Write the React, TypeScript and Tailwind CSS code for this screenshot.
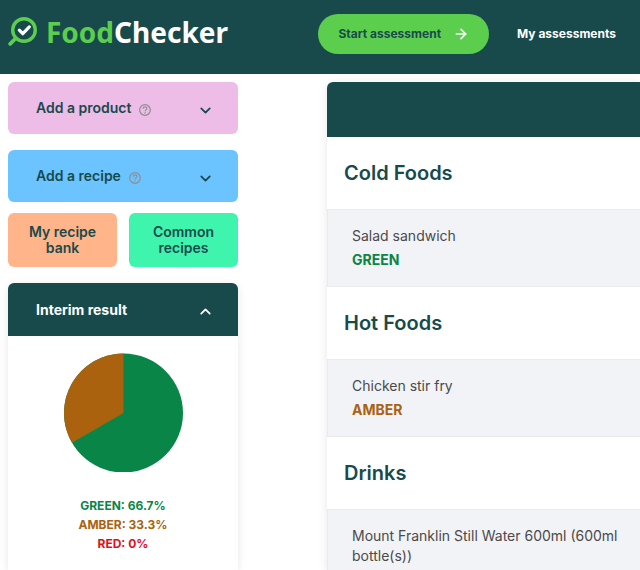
import type { ReactNode } from 'react';
import { ArrowRight, ChevronDown, ChevronUp } from 'lucide-react';

const menu = [
  { category: 'Cold Foods', item: 'Salad sandwich', rating: 'GREEN' },
  { category: 'Hot Foods', item: 'Chicken stir fry', rating: 'AMBER' },
  { category: 'Drinks', item: 'Mount Franklin Still Water 600ml (600ml bottle(s))' },
];

const ratingColors: Record<string, string> = {
  GREEN: 'text-[#088547]',
  AMBER: 'text-[#ab620f]',
  RED: 'text-[#e01020]',
};

function Logo() {
  return (
    <a href="#" className="flex items-center gap-2 text-white">
      <svg width="30" height="30" viewBox="0 0 30 30" fill="none" strokeLinecap="round" strokeLinejoin="round">
        <circle cx="16" cy="13" r="11.3" stroke="#5bce4e" strokeWidth="3.4" />
        <path d="M7.5 21.5 2.2 26.8" stroke="#5bce4e" strokeWidth="3.8" />
        <path d="m11.3 13.2 3.5 3.5 6.5-6.8" stroke="#fff" strokeWidth="3.2" />
      </svg>
      <span className="font-['Noto_Sans',sans-serif] text-[28px] leading-9 font-bold">
        <span className="text-[#5bce4e]">Food</span>Checker
      </span>
    </a>
  );
}

function HelpIcon() {
  return (
    <svg width="12" height="12" viewBox="0 0 11 11" fill="none" stroke="#8e8e94" className="mt-1">
      <circle cx="5.5" cy="5.5" r="4.9" strokeWidth="1.1" />
      <path d="M3.8 4.3c0-2.2 3.4-2.2 3.4-.1 0 1.2-1.7 1.2-1.7 2.5" strokeWidth="1.1" />
      <path d="M5.5 7.6v1.2" strokeWidth="1.2" />
    </svg>
  );
}

function AddButton({ className, children }: { className: string; children: ReactNode }) {
  return (
    <button
      className={`flex h-[52px] w-full shrink-0 items-center rounded-md pr-6 pl-7 text-sm font-semibold ${className}`}
    >
      <span>{children}</span>
      <span className="ml-2">
        <HelpIcon />
      </span>
      <ChevronDown size={17} strokeWidth={2.5} className="mt-1 ml-auto" />
    </button>
  );
}

function PieChart() {
  return (
    <svg width="120" height="119" viewBox="0 0 120 119" className="mx-auto">
      <circle cx="60.5" cy="60" r="59.5" fill="#088547" />
      <path d="M60.5 60V.5A59.5 59.5 0 0 0 9 89.8Z" fill="#ab620f" />
    </svg>
  );
}

function Sidebar() {
  return (
    <aside className="flex w-[230px] shrink-0 flex-col gap-4">
      <AddButton className="bg-[#eebde7]">Add a product</AddButton>
      <div className="flex flex-col gap-[11px]">
        <AddButton className="bg-[#6bc4ff]">Add a recipe</AddButton>
        <div className="grid grid-cols-2 gap-3">
          <button className="rounded-md bg-[#ffb48a] px-4 py-[11px] text-sm leading-4 font-semibold">
            My recipe bank
          </button>
          <button className="rounded-md bg-[#3ff5ae] px-4 py-[11px] text-sm leading-4 font-semibold">
            Common recipes
          </button>
        </div>
      </div>
      <section className="grow rounded-t-md shadow-[0_2px_8px_rgba(0,0,0,0.1)]">
        <button className="flex h-[53px] w-full items-center justify-between rounded-t-md bg-[#194a4b] pr-6 pl-7 text-sm font-bold text-white">
          Interim result
          <ChevronUp size={17} strokeWidth={2.5} className="mt-1" />
        </button>
        <div className="pt-[17px]">
          <PieChart />
          <div className="pt-6 text-center text-xs leading-[19px] font-bold">
            <p className={ratingColors.GREEN}>GREEN: 66.7%</p>
            <p className={ratingColors.AMBER}>AMBER: 33.3%</p>
            <p className={ratingColors.RED}>RED: 0%</p>
          </div>
        </div>
      </section>
    </aside>
  );
}

export default function App() {
  return (
    <div className="flex h-screen flex-col overflow-hidden bg-white font-[Inter,sans-serif] text-[#194a4b]">
      <header className="flex shrink-0 items-start justify-between bg-[#194a4b] pt-3.5 pr-6 pb-5 pl-2">
        <Logo />
        <nav className="flex items-center gap-7 text-xs font-bold">
          <button className="flex h-10 items-center gap-3 rounded-full bg-[#5bce4e] px-5">
            Start assessment
            <ArrowRight size={16} strokeWidth={2.5} className="text-white" />
          </button>
          <a href="#" className="text-white">
            My assessments
          </a>
        </nav>
      </header>

      <div className="flex min-h-0 grow gap-[89px] pt-2 pl-2">
        <Sidebar />
        <main className="min-w-0 grow rounded-tl-md shadow-[0_2px_10px_rgba(0,0,0,0.1)]">
          <div className="h-[55px] rounded-tl-md bg-[#194a4b]" />
          {menu.map(({ category, item, rating }) => (
            <section key={category}>
              <h2 className="px-[17px] py-[22px] text-xl leading-7 font-semibold">{category}</h2>
              <div className="flex flex-col gap-1 border border-r-0 border-[#e8eaee] bg-[#f2f3f7] py-4 pr-4 pl-6 leading-5">
                <p className="text-sm text-[#4a4a4a]">{item}</p>
                {rating && <p className={`text-sm font-bold ${ratingColors[rating]}`}>{rating}</p>}
              </div>
            </section>
          ))}
        </main>
      </div>
    </div>
  );
}
